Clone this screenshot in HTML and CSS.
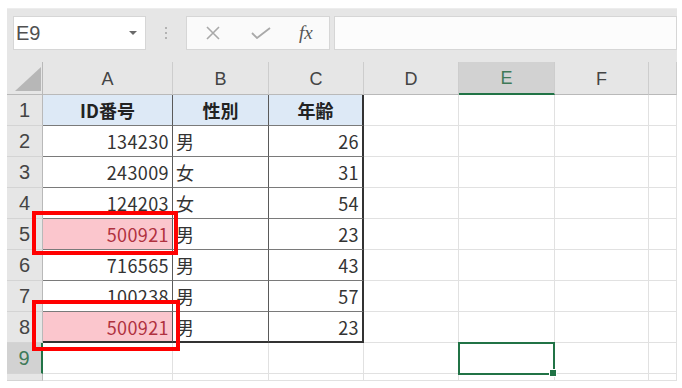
FILE: index.html
```html
<!DOCTYPE html>
<html lang="ja">
<head>
  <meta charset="UTF-8">
  <title>Book1 - Excel</title>
  <link rel="stylesheet" href="styles.css">
</head>
<body>
  <div class="app">
    <div class="toolbar">
      <div class="namebox">
        <span>E9</span>
        <svg class="caret" width="8" height="4" viewBox="0 0 8 4"><path d="M0 0h8L4 4z" fill="#6a6a6a"/></svg>
      </div>
      <div class="grip"><i></i><i></i><i></i></div>
      <div class="fbuttons">
        <svg width="16" height="14" viewBox="0 0 16 14"><path d="M2 1l12 12M14 1L2 13" stroke="#a9a9a9" stroke-width="1.6" fill="none"/></svg>
        <svg width="20" height="12" viewBox="0 0 20 12"><path d="M1 6l5 5L19 1" stroke="#a9a9a9" stroke-width="1.8" fill="none"/></svg>
        <span class="fx">fx</span>
      </div>
      <div class="finput"></div>
    </div>

    <div class="sheet">
      <div class="ch corner"><svg width="26" height="24" viewBox="0 0 26 24"><path d="M26 0V24H0z" fill="#b7b7b7"/></svg></div>
      <div class="ch">A</div>
      <div class="ch">B</div>
      <div class="ch">C</div>
      <div class="ch">D</div>
      <div class="ch on">E</div>
      <div class="ch">F</div>
      <div class="ch"></div>

      <div class="rh">1</div>
      <div class="c t head">ID番号</div>
      <div class="c t head">性別</div>
      <div class="c t tr head">年齢</div>
      <div class="c"></div><div class="c"></div><div class="c"></div><div class="c"></div>

      <div class="rh">2</div>
      <div class="c t num">134230</div>
      <div class="c t">男</div>
      <div class="c t tr num">26</div>
      <div class="c"></div><div class="c"></div><div class="c"></div><div class="c"></div>

      <div class="rh">3</div>
      <div class="c t num">243009</div>
      <div class="c t">女</div>
      <div class="c t tr num">31</div>
      <div class="c"></div><div class="c"></div><div class="c"></div><div class="c"></div>

      <div class="rh">4</div>
      <div class="c t num">124203</div>
      <div class="c t">女</div>
      <div class="c t tr num">54</div>
      <div class="c"></div><div class="c"></div><div class="c"></div><div class="c"></div>

      <div class="rh">5</div>
      <div class="c t num dup">500921</div>
      <div class="c t">男</div>
      <div class="c t tr num">23</div>
      <div class="c"></div><div class="c"></div><div class="c"></div><div class="c"></div>

      <div class="rh">6</div>
      <div class="c t num">716565</div>
      <div class="c t">男</div>
      <div class="c t tr num">43</div>
      <div class="c"></div><div class="c"></div><div class="c"></div><div class="c"></div>

      <div class="rh">7</div>
      <div class="c t num">100238</div>
      <div class="c t">男</div>
      <div class="c t tr num">57</div>
      <div class="c"></div><div class="c"></div><div class="c"></div><div class="c"></div>

      <div class="rh">8</div>
      <div class="c t tb num dup">500921</div>
      <div class="c t tb">男</div>
      <div class="c t tr tb num">23</div>
      <div class="c"></div><div class="c"></div><div class="c"></div><div class="c"></div>

      <div class="rh on">9</div>
      <div class="c"></div>
      <div class="c"></div>
      <div class="c"></div>
      <div class="c"></div>
      <div class="c active"></div>
      <div class="c"></div>
      <div class="c"></div>

      <div class="rh"></div>
      <div class="c"></div><div class="c"></div><div class="c"></div><div class="c"></div>
      <div class="c"></div><div class="c"></div><div class="c"></div>

      <div class="mark mark1"></div>
      <div class="mark mark2"></div>
    </div>
  </div>
</body>
</html>
```

FILE: styles.css
```css
* {
  box-sizing: border-box;
}
body {
  margin: 0;
  background: #fff;
  font-family: "Noto Sans CJK JP", "Noto Sans", sans-serif;
}
.app {
  margin: 8px 0 0 7px;
  width: 670px;
}
.toolbar {
  height: 54px;
  background: #e6e6e6;
  border-top: 1px solid #ededed;
  display: flex;
  align-items: flex-start;
  padding: 7px 0 0 6px;
}
.namebox {
  width: 133px;
  height: 34px;
  background: #fff;
  border: 1px solid #d6d6d6;
  display: flex;
  align-items: center;
  justify-content: space-between;
  padding: 0 8px 0 2px;
  font: 20px "Liberation Sans", sans-serif;
  color: #505050;
}
.grip {
  width: 40px;
  height: 34px;
  display: flex;
  flex-direction: column;
  align-items: center;
  justify-content: center;
  gap: 3px;
}
.grip i {
  width: 2px;
  height: 2px;
  background: #b3b3b3;
}
.fbuttons {
  width: 144px;
  height: 34px;
  background: #fafafa;
  border: 1px solid #d6d6d6;
  display: flex;
  align-items: center;
  padding-left: 18px;
  gap: 30px;
}
.fx {
  font: italic 19px "Liberation Serif", serif;
  color: #555;
  margin-left: -2px;
}
.finput {
  flex: 1;
  height: 34px;
  margin-left: 4px;
  background: #fcfcfc;
  border: 1px solid #d6d6d6;
}
.sheet {
  position: relative;
  display: grid;
  grid-template-columns: 36px 130px 96px 95px 95px 96px 94px 28px;
  grid-template-rows: 33px repeat(9, 31px) 7px;
  background: #fff;
}
.ch {
  background: #e6e6e6;
  border-right: 1px solid #cdcdcd;
  border-bottom: 1px solid #b9b9b9;
  display: flex;
  align-items: center;
  justify-content: center;
  font: 18px "Liberation Sans", sans-serif;
  color: #444;
  padding-top: 2px;
}
.ch.corner {
  align-items: flex-end;
  justify-content: flex-end;
  padding: 0 1px 3px 0;
  border-right-color: #b9b9b9;
}
.ch.on {
  background: #d2d2d2;
  color: #3f7a58;
  border-bottom: 2px solid #217346;
}
.rh {
  background: #e6e6e6;
  border-right: 1px solid #b9b9b9;
  border-bottom: 1px solid #d4d4d4;
  display: flex;
  align-items: center;
  justify-content: center;
  font: 20px "Liberation Sans", sans-serif;
  color: #444;
}
.rh.on {
  background: #d2d2d2;
  color: #3f7a58;
  border-right: 2px solid #217346;
}
.c {
  border-right: 1px solid #e1e1e1;
  border-bottom: 1px solid #e1e1e1;
  display: flex;
  align-items: center;
  padding: 0 3px;
  font-size: 18px;
  color: #333;
}
.c.t {
  border-right-color: #5a5a5a;
  border-bottom-color: #7a7a7a;
}
.c.tr {
  border-right: 2px solid #333;
}
.c.tb {
  border-bottom: 2px solid #333;
}
.c.head {
  background: #dde9f6;
  justify-content: center;
  font-weight: bold;
  color: #222;
}
.c.num {
  justify-content: flex-end;
  letter-spacing: 0.4px;
}
.c.dup {
  background: #fbc6cd;
  color: #b0323f;
}
.c.active {
  position: relative;
  border: 2px solid #217346;
  margin: -1px 0 -1px -1px;
}
.c.active::after {
  content: "";
  position: absolute;
  right: -4px;
  bottom: -4px;
  width: 6px;
  height: 6px;
  background: #217346;
  border: 1px solid #fff;
}
.mark {
  position: absolute;
  border: 4px solid #ff0000;
}
.mark1 {
  left: 25px;
  top: 149px;
  width: 146px;
  height: 44px;
}
.mark2 {
  left: 25px;
  top: 238px;
  width: 148px;
  height: 51px;
}
```
